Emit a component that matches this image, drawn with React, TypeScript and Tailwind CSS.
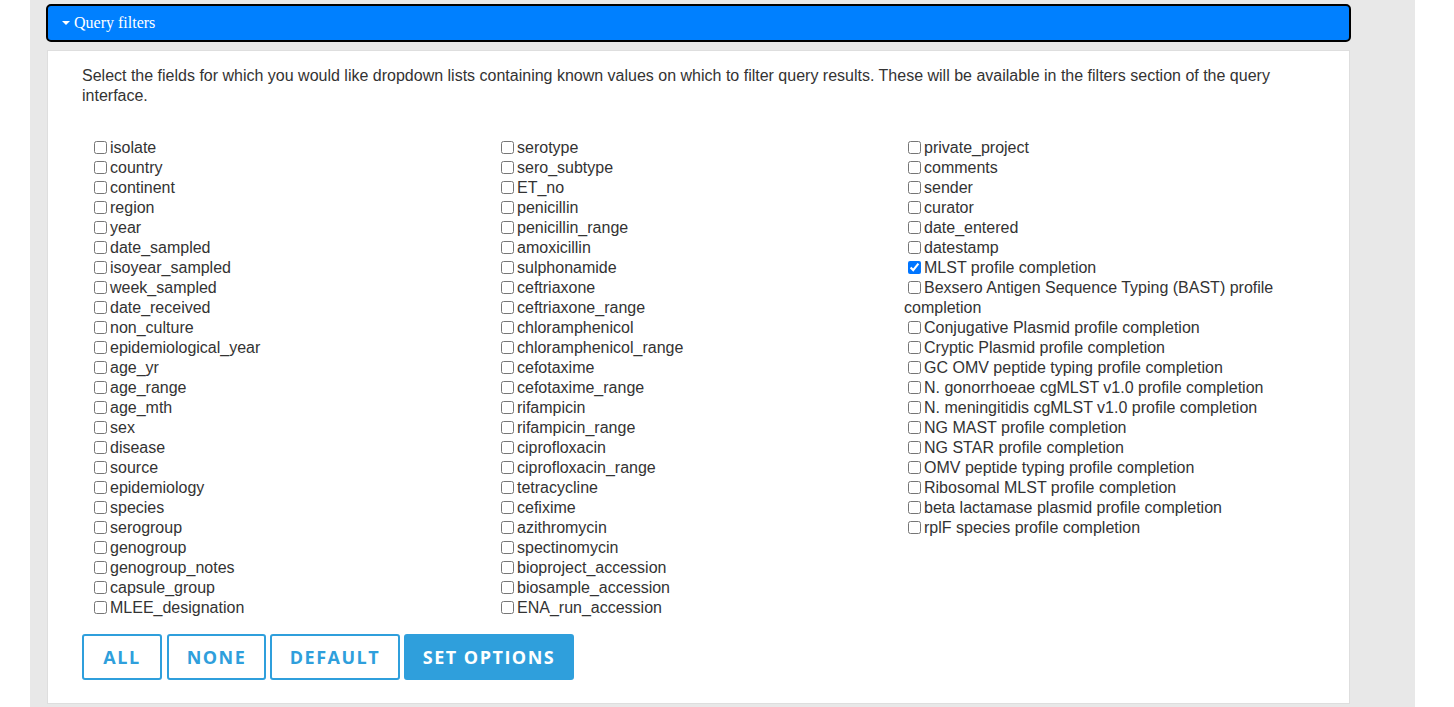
import React, { useState } from "react";

const columns: string[][] = [
  [
    "isolate",
    "country",
    "continent",
    "region",
    "year",
    "date_sampled",
    "isoyear_sampled",
    "week_sampled",
    "date_received",
    "non_culture",
    "epidemiological_year",
    "age_yr",
    "age_range",
    "age_mth",
    "sex",
    "disease",
    "source",
    "epidemiology",
    "species",
    "serogroup",
    "genogroup",
    "genogroup_notes",
    "capsule_group",
    "MLEE_designation",
  ],
  [
    "serotype",
    "sero_subtype",
    "ET_no",
    "penicillin",
    "penicillin_range",
    "amoxicillin",
    "sulphonamide",
    "ceftriaxone",
    "ceftriaxone_range",
    "chloramphenicol",
    "chloramphenicol_range",
    "cefotaxime",
    "cefotaxime_range",
    "rifampicin",
    "rifampicin_range",
    "ciprofloxacin",
    "ciprofloxacin_range",
    "tetracycline",
    "cefixime",
    "azithromycin",
    "spectinomycin",
    "bioproject_accession",
    "biosample_accession",
    "ENA_run_accession",
  ],
  [
    "private_project",
    "comments",
    "sender",
    "curator",
    "date_entered",
    "datestamp",
    "MLST profile completion",
    "Bexsero Antigen Sequence Typing (BAST) profile completion",
    "Conjugative Plasmid profile completion",
    "Cryptic Plasmid profile completion",
    "GC OMV peptide typing profile completion",
    "N. gonorrhoeae cgMLST v1.0 profile completion",
    "N. meningitidis cgMLST v1.0 profile completion",
    "NG MAST profile completion",
    "NG STAR profile completion",
    "OMV peptide typing profile completion",
    "Ribosomal MLST profile completion",
    "beta lactamase plasmid profile completion",
    "rplF species profile completion",
  ],
];

const FilterItem = ({
  label,
  checked,
  onToggle,
}: {
  label: string;
  checked: boolean;
  onToggle: () => void;
}) => (
  <li className="leading-[20px]">
    <input
      type="checkbox"
      checked={checked}
      onChange={onToggle}
      className="m-[3px_3px_3px_4px] h-[13px] w-[13px] align-[-1px]"
    />
    <label onClick={onToggle}>{label}</label>
  </li>
);

export default function App() {
  const [selected, setSelected] = useState<string[]>([
    "MLST profile completion",
  ]);

  const toggle = (name: string) =>
    setSelected((s) =>
      s.includes(name) ? s.filter((n) => n !== name) : [...s, name],
    );

  const all = columns.flat();

  return (
    <div className="min-h-[707px] bg-white">
      <div className="ml-[30px] w-[1385px] min-h-[707px] bg-[#e8e8e8] pl-4 pr-[64px] pt-1 pb-[2px]">
        <div className="flex h-[38px] items-center rounded-[5px] border-2 border-black bg-[#0080ff] pl-[14px] font-['Liberation_Serif',serif] text-[16px] text-white">
          <span className="mr-[4px] inline-block h-0 w-0 border-x-[4px] border-t-[4px] border-x-transparent border-t-white" />
          Query filters
        </div>
        <div className="mt-2 ml-px w-[1303px] border border-[#dedede] bg-white pl-[34px] pr-[34px] pt-[15px] pb-[23px] font-['Liberation_Sans',Arial,sans-serif] text-[16px] text-[#333]">
          <p className="leading-[20px]">
            Select the fields for which you would like dropdown lists containing
            known values on which to filter query results. These will be
            available in the filters section of the query interface.
          </p>
          <div className="mt-[32px] ml-2 grid grid-cols-[407px_407px_407px]">
            {columns.map((col, i) => (
              <ul key={i}>
                {col.map((name) => (
                  <FilterItem
                    key={name}
                    label={name}
                    checked={selected.includes(name)}
                    onToggle={() => toggle(name)}
                  />
                ))}
              </ul>
            ))}
          </div>
          <div className="mt-[16px] flex font-['Open_Sans','Noto_Sans',sans-serif] text-[18px] font-bold tracking-[1.5px]">
            <button
              onClick={() => setSelected(all)}
              className="h-[46px] w-[80px] rounded-[3px] border-2 border-[#2f9fdc] text-[#2f9fdc]"
            >
              ALL
            </button>
            <button
              onClick={() => setSelected([])}
              className="ml-[5px] h-[46px] w-[99px] rounded-[3px] border-2 border-[#2f9fdc] text-[#2f9fdc]"
            >
              NONE
            </button>
            <button
              onClick={() => setSelected(["MLST profile completion"])}
              className="ml-[4px] h-[46px] w-[130px] rounded-[3px] border-2 border-[#2f9fdc] text-[#2f9fdc]"
            >
              DEFAULT
            </button>
            <button className="ml-[4px] h-[46px] w-[170px] rounded-[3px] border-2 border-[#2f9fdc] bg-[#2f9fdc] text-white">
              SET OPTIONS
            </button>
          </div>
        </div>
      </div>
    </div>
  );
}
